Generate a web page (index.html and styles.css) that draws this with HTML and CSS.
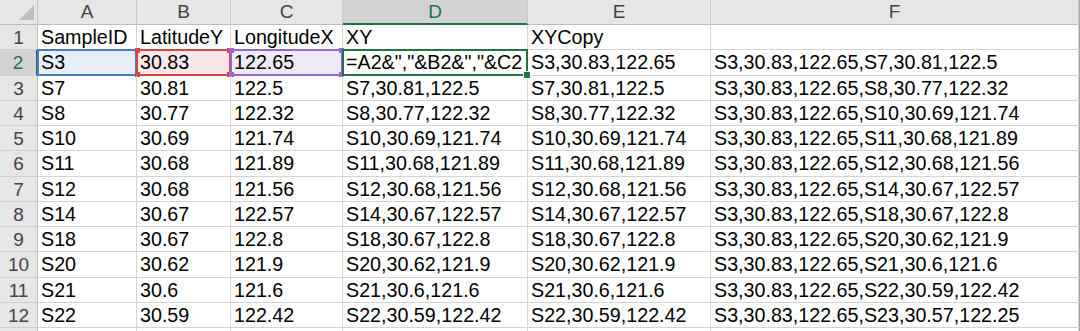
FILE: index.html
```html
<!DOCTYPE html>
<html>
<head>
<meta charset="utf-8">
<link rel="stylesheet" href="styles.css">
</head>
<body>
<div class="sheet">
  <div class="corner"><span class="tri"></span></div>
  <div class="ch">A</div>
  <div class="ch">B</div>
  <div class="ch">C</div>
  <div class="ch ch-act">D</div>
  <div class="ch">E</div>
  <div class="ch">F</div>
  <div class="ch ch-end"></div>

  <div class="rh">1</div>
  <div class="c">SampleID</div><div class="c">LatitudeY</div><div class="c">LongitudeX</div><div class="c">XY</div><div class="c">XYCopy</div><div class="c"></div><div class="c-end"></div>

  <div class="rh rh-act">2</div>
  <div class="c ref-a">S3<span class="rng rng-a"><i class="h tl"></i><i class="h bl"></i><i class="h tr"></i><i class="h br"></i></span></div>
  <div class="c ref-b">30.83<span class="rng rng-b"><i class="h tl"></i><i class="h bl"></i><i class="h tr"></i><i class="h br"></i></span></div>
  <div class="c ref-c">122.65<span class="rng rng-c"><i class="h tl"></i><i class="h bl"></i><i class="h tr"></i><i class="h br"></i></span></div>
  <div class="c act">=A2&amp;","&amp;B2&amp;","&amp;C2<span class="sel"><i class="fill"></i></span></div>
  <div class="c">S3,30.83,122.65</div><div class="c">S3,30.83,122.65,S7,30.81,122.5</div><div class="c-end"></div>

  <div class="rh">3</div>
  <div class="c">S7</div><div class="c">30.81</div><div class="c">122.5</div><div class="c">S7,30.81,122.5</div><div class="c">S7,30.81,122.5</div><div class="c">S3,30.83,122.65,S8,30.77,122.32</div><div class="c-end"></div>

  <div class="rh">4</div>
  <div class="c">S8</div><div class="c">30.77</div><div class="c">122.32</div><div class="c">S8,30.77,122.32</div><div class="c">S8,30.77,122.32</div><div class="c">S3,30.83,122.65,S10,30.69,121.74</div><div class="c-end"></div>

  <div class="rh">5</div>
  <div class="c">S10</div><div class="c">30.69</div><div class="c">121.74</div><div class="c">S10,30.69,121.74</div><div class="c">S10,30.69,121.74</div><div class="c">S3,30.83,122.65,S11,30.68,121.89</div><div class="c-end"></div>

  <div class="rh">6</div>
  <div class="c">S11</div><div class="c">30.68</div><div class="c">121.89</div><div class="c">S11,30.68,121.89</div><div class="c">S11,30.68,121.89</div><div class="c">S3,30.83,122.65,S12,30.68,121.56</div><div class="c-end"></div>

  <div class="rh">7</div>
  <div class="c">S12</div><div class="c">30.68</div><div class="c">121.56</div><div class="c">S12,30.68,121.56</div><div class="c">S12,30.68,121.56</div><div class="c">S3,30.83,122.65,S14,30.67,122.57</div><div class="c-end"></div>

  <div class="rh">8</div>
  <div class="c">S14</div><div class="c">30.67</div><div class="c">122.57</div><div class="c">S14,30.67,122.57</div><div class="c">S14,30.67,122.57</div><div class="c">S3,30.83,122.65,S18,30.67,122.8</div><div class="c-end"></div>

  <div class="rh">9</div>
  <div class="c">S18</div><div class="c">30.67</div><div class="c">122.8</div><div class="c">S18,30.67,122.8</div><div class="c">S18,30.67,122.8</div><div class="c">S3,30.83,122.65,S20,30.62,121.9</div><div class="c-end"></div>

  <div class="rh">10</div>
  <div class="c">S20</div><div class="c">30.62</div><div class="c">121.9</div><div class="c">S20,30.62,121.9</div><div class="c">S20,30.62,121.9</div><div class="c">S3,30.83,122.65,S21,30.6,121.6</div><div class="c-end"></div>

  <div class="rh">11</div>
  <div class="c">S21</div><div class="c">30.6</div><div class="c">121.6</div><div class="c">S21,30.6,121.6</div><div class="c">S21,30.6,121.6</div><div class="c">S3,30.83,122.65,S22,30.59,122.42</div><div class="c-end"></div>

  <div class="rh">12</div>
  <div class="c">S22</div><div class="c">30.59</div><div class="c">122.42</div><div class="c">S22,30.59,122.42</div><div class="c">S22,30.59,122.42</div><div class="c">S3,30.83,122.65,S23,30.57,122.25</div><div class="c-end"></div>

  <div class="rh"></div>
  <div class="c"></div><div class="c"></div><div class="c"></div><div class="c"></div><div class="c"></div><div class="c"></div><div class="c-end"></div>
</div>
</body>
</html>
```
FILE: styles.css
```css
html, body {
  margin: 0;
  padding: 0;
  background: #ffffff;
  overflow: hidden;
}

.sheet {
  display: grid;
  grid-template-columns: 38px 99px 94px 112px 185px 183px 368px 20px;
  grid-template-rows: 25px repeat(13, 25.25px);
  width: 1080px;
  height: 331px;
  overflow: hidden;
  font-family: "Liberation Sans", Arial, sans-serif;
  color: #000;
}

.corner {
  position: relative;
  background: #e6e6e6;
  border-right: 1px solid #c4c4c4;
  border-bottom: 1px solid #bcbcbc;
  box-sizing: border-box;
}

.tri {
  position: absolute;
  right: 3px;
  bottom: 4px;
  width: 0;
  height: 0;
  border-left: 15px solid transparent;
  border-bottom: 15px solid #bdbdbd;
}

.ch {
  background: #e6e6e6;
  border-right: 1px solid #cbcbcb;
  border-bottom: 1px solid #bcbcbc;
  box-sizing: border-box;
  color: #444;
  font-size: 19px;
  line-height: 24px;
  text-align: center;
}

.ch-act {
  background: #d3d3d3;
  color: #217346;
  border-bottom: 2px solid #217346;
  line-height: 23px;
}

.ch-end {
  border-left: 1px solid #a6a6a6;
  border-right: none;
}

.rh {
  background: #e6e6e6;
  border-right: 1px solid #bcbcbc;
  border-bottom: 1px solid #cfcfcf;
  box-sizing: border-box;
  color: #444;
  font-size: 19px;
  line-height: 25px;
  text-align: center;
}

.rh-act {
  background: #d3d3d3;
  color: #217346;
  border-right: 2px solid #217346;
}

.c {
  position: relative;
  border-right: 1px solid #d4d4d4;
  border-bottom: 1px solid #d4d4d4;
  box-sizing: border-box;
  padding-left: 3px;
  font-size: 19.7px;
  line-height: 25px;
  white-space: nowrap;
}

.c-end {
  border-left: 1px solid #a6a6a6;
  border-bottom: 1px solid #d4d4d4;
  box-sizing: border-box;
  background: #ffffff;
}

.ref-a { background: #e7eef9; }
.ref-b { background: #f9e7e7; }
.ref-c { background: #eeeaf7; }

.rng {
  position: absolute;
  top: -1px;
  left: -1px;
  right: -1px;
  bottom: -1px;
  border: 2px solid;
  box-sizing: border-box;
  pointer-events: none;
}

.rng-a { border-color: #4a78c9; color: #4a78c9; }
.rng-b { border-color: #d24646; color: #d24646; }
.rng-c { border-color: #9668cf; color: #9668cf; }

.h {
  position: absolute;
  width: 5px;
  height: 5px;
  background: currentColor;
}
.h.tl { top: -3px; left: -3px; }
.h.bl { bottom: -3px; left: -3px; }
.h.tr { top: -3px; right: -3px; }
.h.br { bottom: -3px; right: -3px; }

.rng-a .h { display: none; }

.act {
  z-index: 2;
}

.sel {
  position: absolute;
  top: -1px;
  left: -1px;
  right: -1px;
  bottom: -1px;
  border: 2px solid #217346;
  box-sizing: border-box;
  z-index: 3;
}

.fill {
  position: absolute;
  right: -5px;
  bottom: -5px;
  width: 6px;
  height: 6px;
  background: #217346;
  border: 1px solid #ffffff;
}
```
